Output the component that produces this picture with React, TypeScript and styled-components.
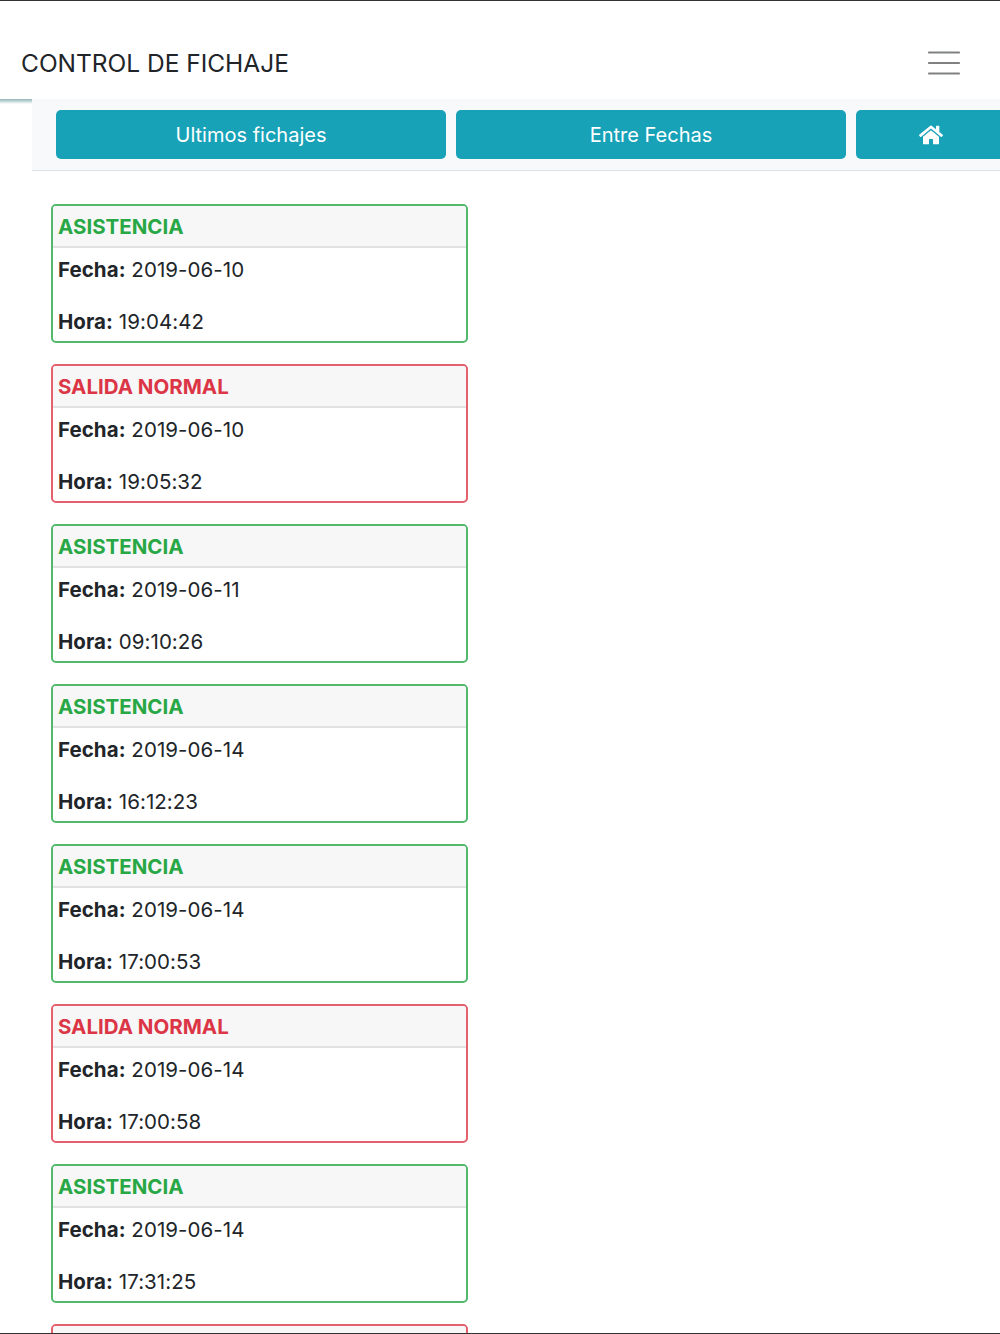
import React from 'react';
import styled, { createGlobalStyle } from 'styled-components';
import { FaHome } from 'react-icons/fa';

const fichajes = [
  { tipo: 'ASISTENCIA', fecha: '2019-06-10', hora: '19:04:42' },
  { tipo: 'SALIDA NORMAL', fecha: '2019-06-10', hora: '19:05:32' },
  { tipo: 'ASISTENCIA', fecha: '2019-06-11', hora: '09:10:26' },
  { tipo: 'ASISTENCIA', fecha: '2019-06-14', hora: '16:12:23' },
  { tipo: 'ASISTENCIA', fecha: '2019-06-14', hora: '17:00:53' },
  { tipo: 'SALIDA NORMAL', fecha: '2019-06-14', hora: '17:00:58' },
  { tipo: 'ASISTENCIA', fecha: '2019-06-14', hora: '17:31:25' },
];

const App = () => {
  return (
    <Page>
      <GlobalStyle />
      <Navbar>
        <Brand>CONTROL DE FICHAJE</Brand>
        <Toggler aria-label="menu">
          <svg width="32" height="26" viewBox="0 0 32 26">
            <path d="M1 2.5h30M1 13h30M1 23.5h30" stroke="#808182" strokeWidth="2.2" strokeLinecap="round" />
          </svg>
        </Toggler>
      </Navbar>
      <Main>
        <Side />
        <Content>
          <Toolbar>
            <ActionButton>Ultimos fichajes</ActionButton>
            <ActionButton>Entre Fechas</ActionButton>
            <ActionButton $home>
              <FaHome size={24} />
            </ActionButton>
          </Toolbar>
          <List>
            {fichajes.map((f, i) => (
              <Card key={i} $salida={f.tipo !== 'ASISTENCIA'}>
                <CardHeader $salida={f.tipo !== 'ASISTENCIA'}>{f.tipo}</CardHeader>
                <CardBody>
                  <Line>
                    <b>Fecha:</b> {f.fecha}
                  </Line>
                  <Line>
                    <b>Hora:</b> {f.hora}
                  </Line>
                </CardBody>
              </Card>
            ))}
            {/* next card, only its top edge is on screen */}
            <Card $salida>
              <CardHeader $salida />
            </Card>
          </List>
        </Content>
      </Main>
    </Page>
  );
};

const GlobalStyle = createGlobalStyle`
  html, body {
    margin: 0;
    padding: 0;
    background: #fff;
  }
  * {
    box-sizing: border-box;
  }
`;

const Page = styled.div`
  position: relative;
  width: 1000px;
  height: 1334px;
  overflow: hidden;
  border-top: 1px solid #333;
  border-bottom: 1px solid #333;
  font-family: Inter, "Liberation Sans", sans-serif;
  font-size: 21px;
  color: #212529;
`;

const Navbar = styled.div`
  height: 98px;
  padding: 0 40px 0 21px;
  display: flex;
  align-items: center;
  justify-content: space-between;
`;

const Brand = styled.div`
  font-size: 24.5px;
  letter-spacing: -0.02px;
  padding-top: 26px;
  line-height: 30px;
`;

const Toggler = styled.button`
  border: 0;
  padding: 0;
  margin-top: 26px;
  background: none;
  display: flex;
`;

const Main = styled.div`
  display: flex;
`;

const Side = styled.div`
  width: 32px;
  height: 5px;
  flex-shrink: 0;
  background: linear-gradient(#8fb5b8, #fff);
`;

const Content = styled.div`
  flex: 1;
  min-width: 0;
`;

const Toolbar = styled.div`
  height: 72px;
  padding: 11px 0 0 24px;
  display: flex;
  gap: 10px;
  overflow: hidden;
  background: #f8f9fa;
  border-bottom: 1.5px solid #dee2e6;
`;

const ActionButton = styled.button<{ $home?: boolean }>`
  width: ${(p) => (p.$home ? '150px' : '390px')};
  height: 49px;
  flex-shrink: 0;
  border: 0;
  border-radius: 5px;
  display: flex;
  align-items: center;
  justify-content: center;
  background: #17a2b8;
  color: #fff;
  font-family: inherit;
  font-size: 20px;
`;

const List = styled.div`
  padding: 33px 0 0 19px;
  display: flex;
  flex-direction: column;
  gap: 21px;
`;

const Card = styled.div<{ $salida: boolean }>`
  width: 417px;
  height: 139px;
  flex-shrink: 0;
  border: 2px solid ${(p) => (p.$salida ? '#e4606d' : '#53b96a')};
  border-radius: 5px;
  overflow: hidden;
  background: #fff;
`;

const CardHeader = styled.div<{ $salida: boolean }>`
  height: 42px;
  padding: 0 5px;
  display: flex;
  align-items: center;
  background: #f7f7f7;
  border-bottom: 2px solid #e2e2e2;
  color: ${(p) => (p.$salida ? '#dc3545' : '#28a745')};
  font-size: 20.5px;
  font-weight: 700;
`;

const CardBody = styled.div`
  padding: 7px 5px 0;
  display: flex;
  flex-direction: column;
  gap: 22px;
`;

const Line = styled.div`
  line-height: 30px;
  font-size: 20.5px;
  letter-spacing: 0.05px;

  b {
    font-weight: 700;
  }
`;

export default App;
